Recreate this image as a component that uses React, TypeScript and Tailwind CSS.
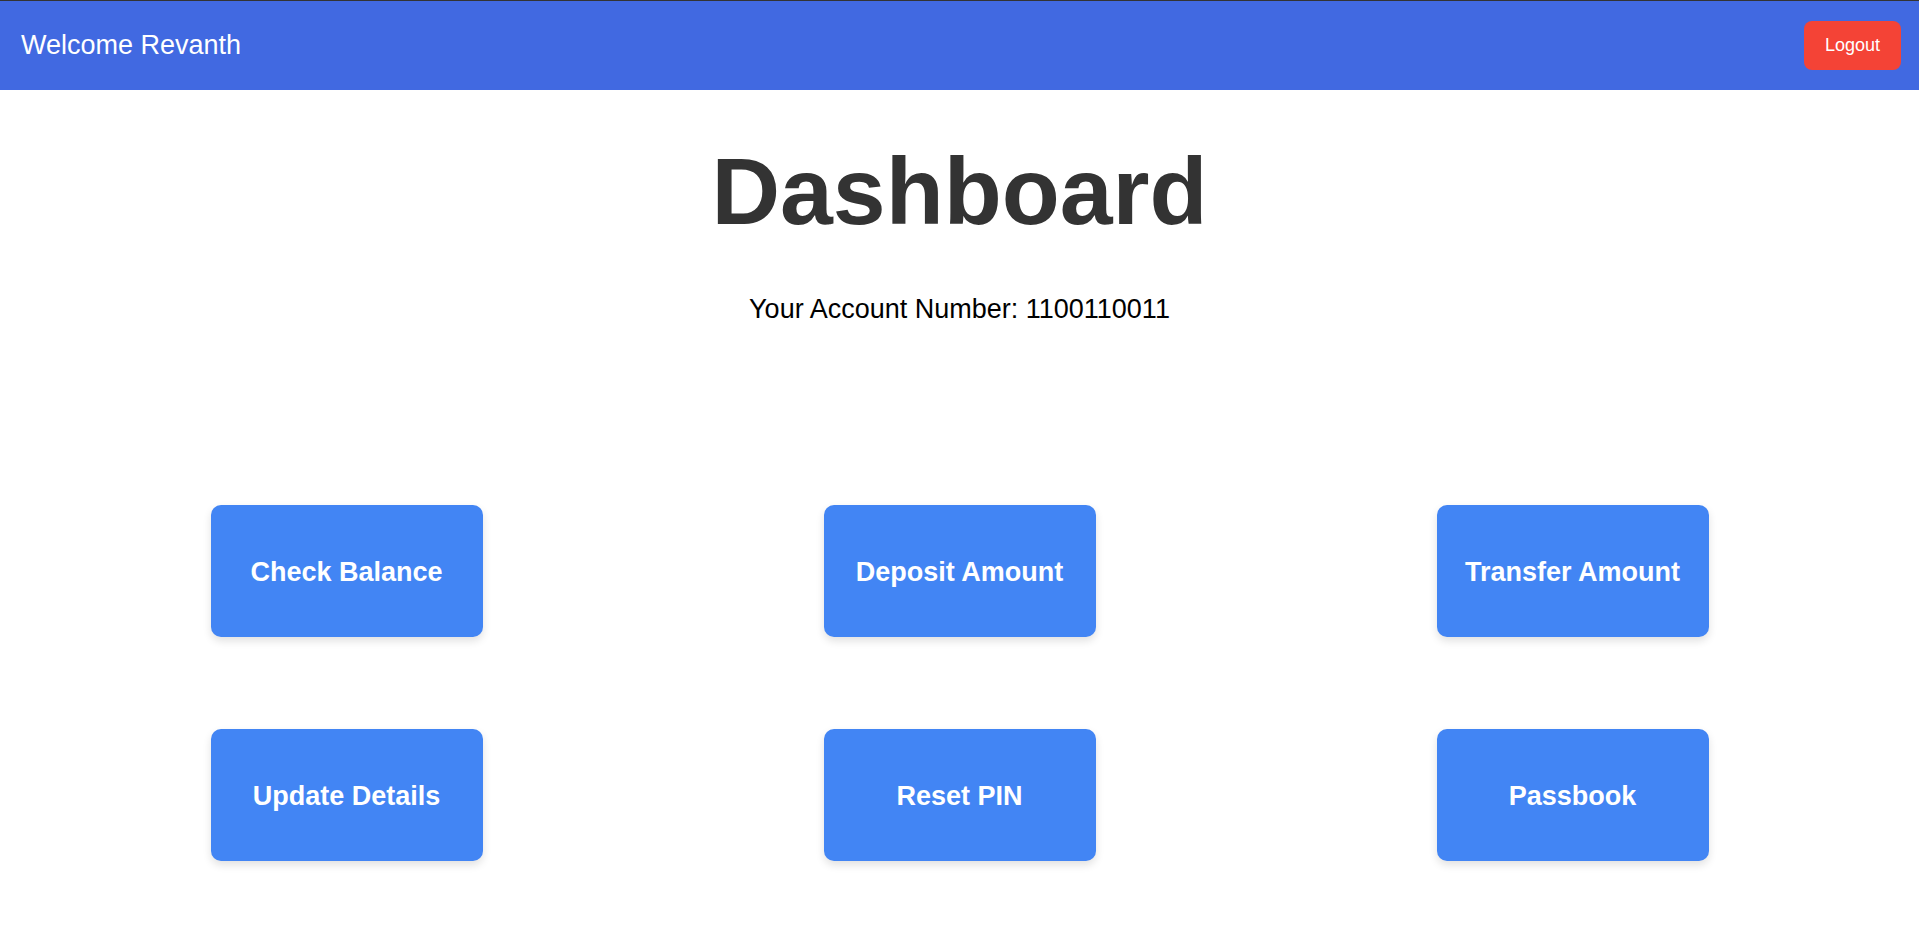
import React from 'react';

const actions = [
	'Check Balance',
	'Deposit Amount',
	'Transfer Amount',
	'Update Details',
	'Reset PIN',
	'Passbook',
];

const Header = ({ name }: { name: string }) => {
	return (
		<header className="flex items-center justify-between h-[90px] border-t border-[#333333] bg-[#4169E1] pl-[21px] pr-[18px]">
			<span className="text-[27px] text-white leading-none">Welcome {name}</span>
			<button className="w-[97px] h-[49px] rounded-lg bg-[#F44336] text-[18px] text-white">
				Logout
			</button>
		</header>
	);
};

export default function App() {
	return (
		<div className="min-h-[949px] bg-white font-['Liberation_Sans',Arial,sans-serif]">
			<Header name="Revanth" />
			<main className="flex flex-col items-center">
				<h1 className="mt-[53px] text-[95px] leading-[96px] font-bold text-[#333333]">Dashboard</h1>
				<p className="mt-[57px] text-[27px] leading-[27px] text-black">Your Account Number: 1100110011</p>
				<div className="mt-[182px] grid w-full grid-cols-3 gap-y-[92px] px-10">
					{actions.map((label) => (
						<div key={label} className="flex justify-center">
							<button className="flex h-[132px] w-[272px] items-center justify-center rounded-[10px] bg-[#4285F4] pt-[2px] text-[27px] font-bold text-white shadow-[0_4px_8px_rgba(0,0,0,0.12)]">
								{label}
							</button>
						</div>
					))}
				</div>
			</main>
		</div>
	);
}
